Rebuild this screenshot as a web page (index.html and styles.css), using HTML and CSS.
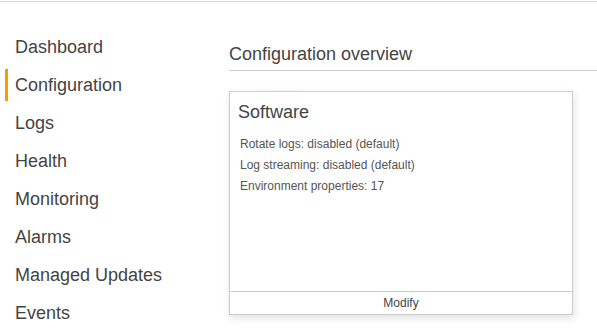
FILE: index.html
```html
<!DOCTYPE html>
<html lang="en">
<head>
<meta charset="utf-8">
<title>Configuration</title>
<link rel="stylesheet" href="styles.css">
</head>
<body>
<div class="topline"></div>
<div class="layout">
  <nav class="sidebar">
    <a class="nav-item">Dashboard</a>
    <a class="nav-item active">Configuration</a>
    <a class="nav-item">Logs</a>
    <a class="nav-item">Health</a>
    <a class="nav-item">Monitoring</a>
    <a class="nav-item">Alarms</a>
    <a class="nav-item">Managed Updates</a>
    <a class="nav-item">Events</a>
  </nav>
  <main class="main">
    <h1 class="page-title">Configuration overview</h1>
    <section class="card">
      <div class="card-body">
        <h2 class="card-title">Software</h2>
        <ul class="props">
          <li>Rotate logs: disabled (default)</li>
          <li>Log streaming: disabled (default)</li>
          <li>Environment properties: 17</li>
        </ul>
      </div>
      <div class="card-footer">Modify</div>
    </section>
  </main>
</div>
</body>
</html>
```
FILE: styles.css
```css
html, body {
  margin: 0;
  padding: 0;
  background: #fff;
}
body {
  font-family: "Liberation Sans", Arial, sans-serif;
  color: #444;
  width: 597px;
  height: 331px;
  overflow: hidden;
}
.topline {
  margin-top: 1px;
  height: 1px;
  background: #d5d5d5;
}
.layout {
  display: grid;
  grid-template-columns: 229px 1fr;
}
.sidebar {
  display: flex;
  flex-direction: column;
  gap: 6px;
  padding: 29px 0 0 5px;
}
.nav-item {
  display: block;
  height: 32px;
  line-height: 32px;
  font-size: 18px;
  padding-left: 7px;
  border-left: 3px solid transparent;
  color: #444;
  white-space: nowrap;
}
.nav-item.active {
  border-left-color: #ff9900;
}
.main {
  padding-top: 41px;
}
.page-title {
  margin: 0;
  font-size: 18px;
  font-weight: normal;
  line-height: 22px;
  padding-bottom: 5px;
  border-bottom: 1px solid #ccc;
  color: #444;
}
.card {
  margin-top: 20px;
  width: 342px;
  height: 222px;
  border: 1px solid #ccc;
  box-shadow: 1px 3px 8px rgba(0, 0, 0, 0.12);
  display: flex;
  flex-direction: column;
}
.card-body {
  flex: 1;
  padding: 9px 8px 0;
}
.card-title {
  margin: 0;
  font-size: 18px;
  font-weight: normal;
  line-height: 22px;
  color: #444;
}
.props {
  list-style: none;
  margin: 11px 0 0;
  padding: 0 0 0 2px;
  font-size: 12px;
  line-height: 21px;
  color: #555;
}
.card-footer {
  border-top: 1px solid #ccc;
  height: 22px;
  line-height: 22px;
  text-align: center;
  font-size: 12px;
  color: #444;
}
```
